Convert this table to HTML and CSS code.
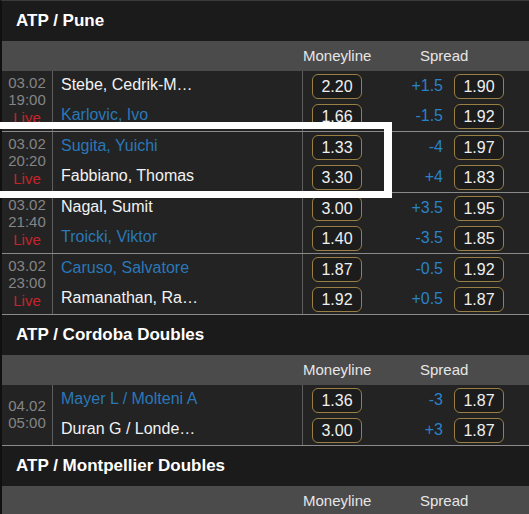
FILE: index.html
```html
<!DOCTYPE html>
<html>
<head>
<meta charset="utf-8">
<link rel="stylesheet" href="styles.css">
</head>
<body>
<div class="board">
  <section class="league first">
    <h2 class="league-title">ATP / Pune</h2>
    <div class="col-head"><span class="ch-ml">Moneyline</span><span class="ch-sp">Spread</span></div>
    <div class="match">
      <div class="when"><span>03.02</span><span>19:00</span><span class="live">Live</span></div>
      <div class="lines">
        <div class="line"><span class="name">Stebe, Cedrik-M…</span><span class="ml"><span class="odd">2.20</span></span><span class="sp">+1.5</span><span class="odd">1.90</span></div>
        <div class="line"><span class="name blue">Karlovic, Ivo</span><span class="ml"><span class="odd">1.66</span></span><span class="sp">-1.5</span><span class="odd">1.92</span></div>
      </div>
    </div>
    <div class="match">
      <div class="when"><span>03.02</span><span>20:20</span><span class="live">Live</span></div>
      <div class="lines">
        <div class="line"><span class="name blue">Sugita, Yuichi</span><span class="ml"><span class="odd">1.33</span></span><span class="sp">-4</span><span class="odd">1.97</span></div>
        <div class="line"><span class="name">Fabbiano, Thomas</span><span class="ml"><span class="odd">3.30</span></span><span class="sp">+4</span><span class="odd">1.83</span></div>
      </div>
    </div>
    <div class="match">
      <div class="when"><span>03.02</span><span>21:40</span><span class="live">Live</span></div>
      <div class="lines">
        <div class="line"><span class="name">Nagal, Sumit</span><span class="ml"><span class="odd">3.00</span></span><span class="sp">+3.5</span><span class="odd">1.95</span></div>
        <div class="line"><span class="name blue">Troicki, Viktor</span><span class="ml"><span class="odd">1.40</span></span><span class="sp">-3.5</span><span class="odd">1.85</span></div>
      </div>
    </div>
    <div class="match">
      <div class="when"><span>03.02</span><span>23:00</span><span class="live">Live</span></div>
      <div class="lines">
        <div class="line"><span class="name blue">Caruso, Salvatore</span><span class="ml"><span class="odd">1.87</span></span><span class="sp">-0.5</span><span class="odd">1.92</span></div>
        <div class="line"><span class="name">Ramanathan, Ra…</span><span class="ml"><span class="odd">1.92</span></span><span class="sp">+0.5</span><span class="odd">1.87</span></div>
      </div>
    </div>
  </section>
  <section class="league">
    <h2 class="league-title">ATP / Cordoba Doubles</h2>
    <div class="col-head"><span class="ch-ml">Moneyline</span><span class="ch-sp">Spread</span></div>
    <div class="match">
      <div class="when"><span>04.02</span><span>05:00</span></div>
      <div class="lines">
        <div class="line"><span class="name blue">Mayer L / Molteni A</span><span class="ml"><span class="odd">1.36</span></span><span class="sp">-3</span><span class="odd">1.87</span></div>
        <div class="line"><span class="name">Duran G / Londe…</span><span class="ml"><span class="odd">3.00</span></span><span class="sp">+3</span><span class="odd">1.87</span></div>
      </div>
    </div>
  </section>
  <section class="league">
    <h2 class="league-title">ATP / Montpellier Doubles</h2>
    <div class="col-head"><span class="ch-ml">Moneyline</span><span class="ch-sp">Spread</span></div>
  </section>
  <div class="highlight"></div>
</div>
</body>
</html>
```

FILE: styles.css
```css
* { box-sizing: border-box; }
html, body {
  margin: 0;
  padding: 0;
  background: #1b1b1b;
  font-family: "Liberation Sans", Arial, sans-serif;
  overflow: hidden;
}
.board {
  position: relative;
  width: 529px;
  border-left: 2px solid #101010;
  border-top: 1px solid #3a3a3a;
}
.league-title {
  margin: 0;
  height: 40px;
  line-height: 40px;
  padding-left: 14px;
  font-size: 17px;
  font-weight: bold;
  color: #fff;
  background: #1b1b1b;
}
.col-head {
  height: 30px;
  line-height: 30px;
  background: #4b4b4b;
  color: #e6e6e6;
  font-size: 15px;
  display: flex;
  padding-left: 301px;
}
.ch-ml { width: 68px; text-align: center; }
.ch-sp { margin-left: 49px; }
.match {
  display: flex;
  background: #232323;
  border-bottom: 1px solid #8a8a8a;
}
.when {
  width: 51px;
  border-right: 1px solid #5e5e5e;
  display: flex;
  flex-direction: column;
  justify-content: center;
  align-items: center;
  font-size: 15px;
  line-height: 17px;
  color: #858585;
  padding-bottom: 2px;
}
.live { color: #c8232b; margin-top: 1px; }
.lines { flex: 1; display: flex; flex-direction: column; }
.line {
  height: 30px;
  display: flex;
  align-items: center;
  font-size: 16px;
}
.name {
  width: 249px;
  padding-left: 8px;
  color: #f2f2f2;
  white-space: nowrap;
  margin-top: -3px;
}
.blue { color: #2a78b8; }
.ml {
  align-self: stretch;
  display: flex;
  align-items: center;
  border-left: 1px solid #5e5e5e;
  padding-left: 9px;
  width: 60px;
}
.sp {
  width: 81px;
  text-align: right;
  color: #2a82c8;
  margin-right: 11px;
}
.odd {
  display: inline-block;
  width: 50px;
  height: 25px;
  line-height: 23px;
  text-align: center;
  border: 1px solid #9a7f45;
  border-radius: 6px;
  background: #1c1c1c;
  color: #f0f0f0;
  font-size: 16px;
}
.highlight {
  position: absolute;
  left: -10px;
  top: 121px;
  width: 400px;
  height: 76px;
  border: 7px solid #fff;
  border-right-width: 8px;
  pointer-events: none;
}
```
